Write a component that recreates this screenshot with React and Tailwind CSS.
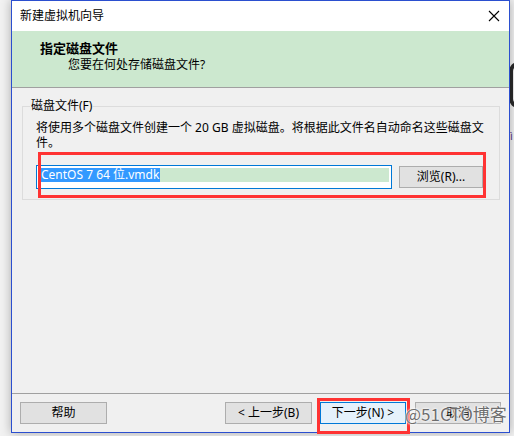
import React from "react";

const font = "font-['Noto_Sans','Noto_Sans_CJK_SC',sans-serif]";

function Btn({ children, className = "" }) {
  return (
    <div
      className={`h-[22px] flex items-center justify-center border text-[12px] leading-[14px] text-black ${className}`}
    >
      {children}
    </div>
  );
}

export default function App() {
  return (
    <div className={`relative w-[514px] h-[436px] overflow-hidden bg-[#f2f2f2] pl-[11px] ${font}`}>
      {/* window behind on the right */}
      <div className="absolute left-[509px] top-[62px] w-[18px] h-[46px] rounded-full border-[4px] border-[#2a2a2a]" />
      <div className="absolute left-[510px] top-[130px] text-[11px] leading-[12px] text-[#5a3a8a]">ì</div>

      <div className="relative w-[499px] h-[433px] flex flex-col border border-[#2b4fcf] bg-[#f0f0f0] shadow-[0_0_10px_rgba(0,0,0,0.3)]">
        {/* title bar */}
        <div className="h-[30px] shrink-0 bg-white flex items-center justify-between pl-[8px] pr-[8px]">
          <span className="text-[12px] leading-[14px] text-black">新建虚拟机向导</span>
          <svg width="12" height="12" viewBox="0 0 12 12" className="mr-[1px]">
            <path d="M1 1 L11 11 M11 1 L1 11" stroke="#000" strokeWidth="1.1" />
          </svg>
        </div>

        {/* header */}
        <div className="h-[57px] shrink-0 bg-[#cce8cf] border-b border-[#a0a0a0] pl-[28px] pt-[9px]">
          <div className="text-[13px] leading-[16px] font-bold text-black">指定磁盘文件</div>
          <div className="mt-[1px] pl-[28px] text-[12px] leading-[16px] text-black">您要在何处存储磁盘文件?</div>
        </div>

        {/* body */}
        <div className="flex-1 pt-[11px] pl-[10px] pr-[9px]">
          <fieldset className="border border-[#dcdcdc]">
            <legend className="ml-[7px] px-[1px] text-[12px] leading-[14px] text-black">磁盘文件(F)</legend>
            <div className="pl-[13px] pr-[8px] pb-[10px]">
              <div className="pt-[7px] text-[12px] leading-[15px] text-black whitespace-nowrap">
                <div>将使用多个磁盘文件创建一个 20 GB 虚拟磁盘。将根据此文件名自动命名这些磁盘文</div>
                <div>件。</div>
              </div>
              <div className="mt-[15px] flex items-center gap-[7px]">
                <div className="w-[356px] h-[24px] border border-[#0078d7] bg-white pl-[4px] pr-[2px] pt-[2px]">
                  <div className="h-[14px] bg-[#cce8cf] flex">
                    <span className="h-[14px] bg-[#3399ff] text-white text-[12px] leading-[14px] whitespace-nowrap pr-[1px]">
                      CentOS 7 64 位.vmdk
                    </span>
                  </div>
                </div>
                <Btn className="w-[84px] bg-[#e1e1e1] border-[#adadad]">浏览(R)...</Btn>
              </div>
            </div>
          </fieldset>
        </div>

        {/* footer */}
        <div className="h-[39px] shrink-0 border-t border-[#a0a0a0] flex items-center px-[8px] pb-[1px]">
          <Btn className="w-[87px] bg-[#e1e1e1] border-[#adadad]">帮助</Btn>
          <div className="ml-auto flex items-center">
            <Btn className="w-[87px] bg-[#e1e1e1] border-[#adadad]">&lt; 上一步(B)</Btn>
            <Btn className="ml-[8px] w-[86px] bg-[#e5f1fb] border-[#0078d7]">下一步(N) &gt;</Btn>
            <Btn className="ml-[9px] w-[86px] bg-[#e1e1e1] border-[#adadad]">取消</Btn>
          </div>
        </div>
      </div>

      {/* red annotation boxes */}
      <div className="absolute left-[38px] top-[152px] w-[448px] h-[46px] border-[3px] border-[#ff3333]" />
      <div className="absolute left-[317px] top-[398px] w-[93px] h-[36px] border-[3px] border-[#ff3333]" />

      {/* watermark */}
      <div className="absolute left-[405px] top-[403px] text-[17px] leading-[22px] text-[#6e6e6e] [text-shadow:0_0_1px_#fff,0_0_2px_#fff,0_0_3px_#fff] whitespace-nowrap font-['Noto_Sans_CJK_SC',sans-serif]">
        @51CTO博客
      </div>
    </div>
  );
}
